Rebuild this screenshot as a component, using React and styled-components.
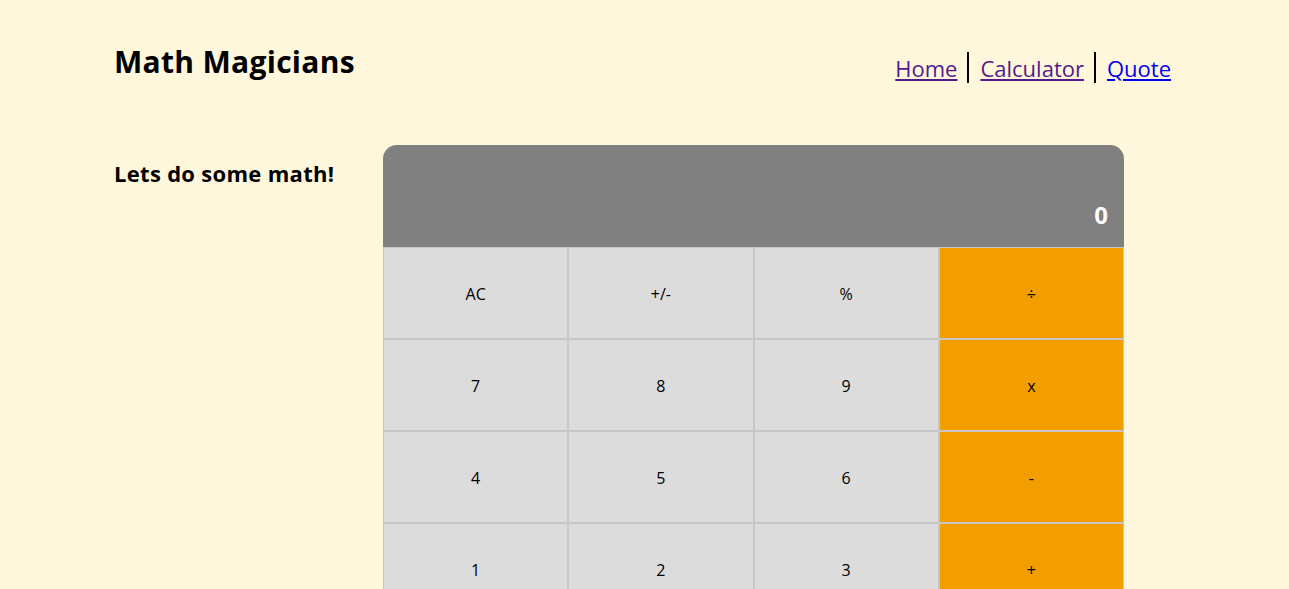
import React from "react";
import styled, { createGlobalStyle } from "styled-components";

const GlobalStyle = createGlobalStyle`
  html, body {
    margin: 0;
    padding: 0;
    background: #fff7dc;
    font-family: "Open Sans", "Noto Sans", sans-serif;
  }
`;

const Page = styled.div`
  padding: 0 118px 0 114px;
`;

const Header = styled.header`
  display: flex;
  justify-content: space-between;
  align-items: flex-start;
  padding-top: 41px;
`;

const Logo = styled.h1`
  margin: 0;
  font-size: 30px;
  font-weight: 700;
  color: #000;
  letter-spacing: 0.3px;
`;

const Nav = styled.ul`
  display: flex;
  list-style: none;
  margin: 11px 0 0;
  padding: 0;
`;

const NavItem = styled.li`
  display: flex;
  align-items: center;
  padding: 0 10px 0 11px;
  border-left: ${(p) => (p.$first ? "none" : "2px solid #000")};
  height: 31px;
  &:first-child {
    padding-left: 0;
  }
  &:last-child {
    padding-right: 0;
  }
`;

const NavLink = styled.a`
  font-size: 22px;
  color: ${(p) => (p.$visited ? "#551a8b" : "#0000ee")};
  text-decoration: underline;
`;

const Main = styled.main`
  display: flex;
  margin-top: 62px;
`;

const Intro = styled.h2`
  margin: 13px 0 0;
  width: 269px;
  flex-shrink: 0;
  font-size: 22px;
  font-weight: 700;
  letter-spacing: 0.3px;
`;

const Calculator = styled.div`
  width: 741px;
`;

const Display = styled.div`
  height: 102px;
  background: #808080;
  border-radius: 14px 14px 0 0;
  display: flex;
  align-items: flex-end;
  justify-content: flex-end;
  padding: 0 16px 16px;
  box-sizing: border-box;
  color: #fff;
  font-size: 24px;
  font-weight: 700;
`;

const Keys = styled.div`
  display: grid;
  grid-template-columns: repeat(4, 1fr);
  grid-auto-rows: 92px;
`;

const Key = styled.button`
  border: 1px solid #c6c6c6;
  background: ${(p) => (p.$op ? "#f29e00" : "#dcdcdc")};
  font-family: inherit;
  font-size: 16px;
  color: #000;
  padding: 1px 0 0;
  cursor: pointer;
`;

const keys = [
  "AC", "+/-", "%", "÷",
  "7", "8", "9", "x",
  "4", "5", "6", "-",
  "1", "2", "3", "+",
  "0", ".", "=",
];

const ops = ["÷", "x", "-", "+", "="];

export default function App() {
  return (
    <>
      <GlobalStyle />
      <Page>
        <Header>
          <Logo>Math Magicians</Logo>
          <Nav>
            <NavItem $first>
              <NavLink href="#" $visited>Home</NavLink>
            </NavItem>
            <NavItem>
              <NavLink href="#" $visited>Calculator</NavLink>
            </NavItem>
            <NavItem>
              <NavLink href="#">Quote</NavLink>
            </NavItem>
          </Nav>
        </Header>
        <Main>
          <Intro>Lets do some math!</Intro>
          <Calculator>
            <Display>0</Display>
            <Keys>
              {keys.map((k) => (
                <Key key={k} type="button" $op={ops.includes(k)}>
                  {k}
                </Key>
              ))}
            </Keys>
          </Calculator>
        </Main>
      </Page>
    </>
  );
}
